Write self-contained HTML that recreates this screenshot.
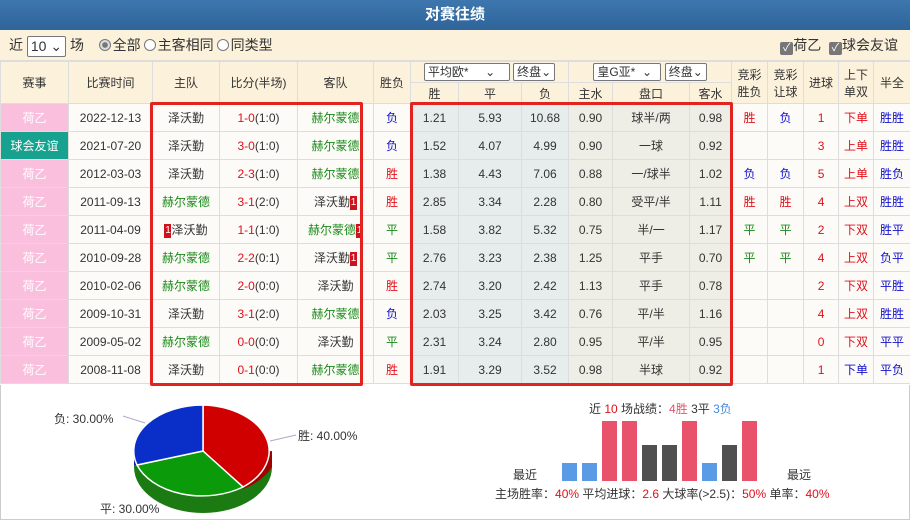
<!DOCTYPE html>
<html style="overflow:hidden;width:910px;height:520px"><head><meta charset="utf-8"><style>
*{margin:0;padding:0;box-sizing:border-box}
body{width:910px;height:520px;overflow:hidden;background:#fff;font-family:"Liberation Sans","Noto Sans CJK SC",sans-serif;font-size:12px;color:#333;position:relative}
.title{height:30px;background:linear-gradient(#3d77ad,#2f6499);color:#fff;font-weight:bold;font-size:15px;text-align:center;line-height:30px}
.filter{height:31px;background:#fcf2dc;border-bottom:1px solid #ddd;position:relative;font-size:14px;line-height:31px;padding-left:9px}
.sel{display:inline-block;border:1px solid #777;background:#fff;height:21px;line-height:19px;padding:0 3px;font-size:14px;vertical-align:middle;border-radius:2px}
.radio{display:inline-block;width:12px;height:12px;border:1px solid #777;border-radius:50%;vertical-align:-1px;background:#fff;margin:0 2px 0 3px}
.radio.on{background:radial-gradient(#777 35%,#ddd 45%)}
.chk{display:inline-block;width:13px;height:13px;background:#777;color:#fff;font-size:11px;line-height:13px;text-align:center;vertical-align:-1px;border-radius:2px}
table{position:absolute;left:0;top:61px;border-collapse:collapse;table-layout:fixed;width:910px}
td{border:1px solid #ddd;text-align:center;height:28px;font-size:12px;background:#fdfbf8;padding:0;white-space:nowrap;overflow:hidden}
thead td{background:#fcf2dc;height:21px;font-size:12px}
.lg{background:#fbbfde;color:#fff}
.fr{background:#16a28e;color:#fff}
.o{background:#e6edec}
.a{background:#eeeee6}
.r{color:#e0101a}.g{color:#1a8a1a}.b{color:#1010c8}
.sm{display:inline-block;border:1px solid #777;background:#fff;height:18px;line-height:16px;font-size:12px;padding:0 3px;text-align:left;border-radius:2px}
.n1{display:inline-block;background:#d0101a;color:#fff;font-size:10px;width:7px;line-height:14px;vertical-align:1px}
.box{position:absolute;border:3px solid #e22420;border-radius:2px}
.bar{position:absolute;width:15px;bottom:39px}
.bb{background:#5b9be6}.br{background:#e8526a}.bd{background:#505050}
.t{position:absolute;font-size:12px;white-space:nowrap}
</style></head><body>
<div class="title">对赛往绩</div>
<div class="filter">近 <span class="sel">10 ⌄</span> 场 &nbsp;&nbsp;<span class="radio on"></span>全部<span class="radio"></span>主客相同<span class="radio"></span>同类型
<span style="position:absolute;right:12px;top:0"><span class="chk">✓</span>荷乙 &nbsp;<span class="chk">✓</span>球会友谊</span></div>
<table>
<colgroup><col style="width:68px"><col style="width:84px"><col style="width:67px"><col style="width:78px"><col style="width:76px"><col style="width:37px"><col style="width:48px"><col style="width:63px"><col style="width:47px"><col style="width:44px"><col style="width:77px"><col style="width:42px"><col style="width:36px"><col style="width:36px"><col style="width:35px"><col style="width:35px"><col style="width:37px"></colgroup>
<thead>
<tr><td rowspan="2">赛事</td><td rowspan="2">比赛时间</td><td rowspan="2">主队</td><td rowspan="2">比分(半场)</td><td rowspan="2">客队</td><td rowspan="2">胜负</td><td colspan="3"><span class="sm" style="width:86px">平均欧* &nbsp; &nbsp; ⌄</span> <span class="sm">终盘⌄</span></td><td colspan="3"><span class="sm" style="width:68px">皇G亚* &nbsp;⌄</span> <span class="sm">终盘⌄</span></td><td rowspan="2">竞彩<br>胜负</td><td rowspan="2">竞彩<br>让球</td><td rowspan="2">进球</td><td rowspan="2">上下<br>单双</td><td rowspan="2">半全</td></tr>
<tr><td>胜</td><td>平</td><td>负</td><td>主水</td><td>盘口</td><td>客水</td></tr>
</thead>
<tbody>
<tr><td class="lg">荷乙</td><td>2022-12-13</td><td>泽沃勤</td><td><span class="r">1-0</span>(1:0)</td><td class="g">赫尔蒙德</td><td class="b">负</td><td class="o">1.21</td><td class="o">5.93</td><td class="o">10.68</td><td class="a">0.90</td><td class="a">球半/两</td><td class="a">0.98</td><td class="r">胜</td><td class="b">负</td><td class="r">1</td><td class="r">下单</td><td class="b">胜胜</td></tr>
<tr><td class="fr">球会友谊</td><td>2021-07-20</td><td>泽沃勤</td><td><span class="r">3-0</span>(1:0)</td><td class="g">赫尔蒙德</td><td class="b">负</td><td class="o">1.52</td><td class="o">4.07</td><td class="o">4.99</td><td class="a">0.90</td><td class="a">一球</td><td class="a">0.92</td><td></td><td></td><td class="r">3</td><td class="r">上单</td><td class="b">胜胜</td></tr>
<tr><td class="lg">荷乙</td><td>2012-03-03</td><td>泽沃勤</td><td><span class="r">2-3</span>(1:0)</td><td class="g">赫尔蒙德</td><td class="r">胜</td><td class="o">1.38</td><td class="o">4.43</td><td class="o">7.06</td><td class="a">0.88</td><td class="a">一/球半</td><td class="a">1.02</td><td class="b">负</td><td class="b">负</td><td class="r">5</td><td class="r">上单</td><td class="b">胜负</td></tr>
<tr><td class="lg">荷乙</td><td>2011-09-13</td><td class="g">赫尔蒙德</td><td><span class="r">3-1</span>(2:0)</td><td>泽沃勤<span class="n1">1</span></td><td class="r">胜</td><td class="o">2.85</td><td class="o">3.34</td><td class="o">2.28</td><td class="a">0.80</td><td class="a">受平/半</td><td class="a">1.11</td><td class="r">胜</td><td class="r">胜</td><td class="r">4</td><td class="r">上双</td><td class="b">胜胜</td></tr>
<tr><td class="lg">荷乙</td><td>2011-04-09</td><td><span class="n1">1</span>泽沃勤</td><td><span class="r">1-1</span>(1:0)</td><td class="g">赫尔蒙德<span class="n1">1</span></td><td class="g">平</td><td class="o">1.58</td><td class="o">3.82</td><td class="o">5.32</td><td class="a">0.75</td><td class="a">半/一</td><td class="a">1.17</td><td class="g">平</td><td class="g">平</td><td class="r">2</td><td class="r">下双</td><td class="b">胜平</td></tr>
<tr><td class="lg">荷乙</td><td>2010-09-28</td><td class="g">赫尔蒙德</td><td><span class="r">2-2</span>(0:1)</td><td>泽沃勤<span class="n1">1</span></td><td class="g">平</td><td class="o">2.76</td><td class="o">3.23</td><td class="o">2.38</td><td class="a">1.25</td><td class="a">平手</td><td class="a">0.70</td><td class="g">平</td><td class="g">平</td><td class="r">4</td><td class="r">上双</td><td class="b">负平</td></tr>
<tr><td class="lg">荷乙</td><td>2010-02-06</td><td class="g">赫尔蒙德</td><td><span class="r">2-0</span>(0:0)</td><td>泽沃勤</td><td class="r">胜</td><td class="o">2.74</td><td class="o">3.20</td><td class="o">2.42</td><td class="a">1.13</td><td class="a">平手</td><td class="a">0.78</td><td></td><td></td><td class="r">2</td><td class="r">下双</td><td class="b">平胜</td></tr>
<tr><td class="lg">荷乙</td><td>2009-10-31</td><td>泽沃勤</td><td><span class="r">3-1</span>(2:0)</td><td class="g">赫尔蒙德</td><td class="b">负</td><td class="o">2.03</td><td class="o">3.25</td><td class="o">3.42</td><td class="a">0.76</td><td class="a">平/半</td><td class="a">1.16</td><td></td><td></td><td class="r">4</td><td class="r">上双</td><td class="b">胜胜</td></tr>
<tr><td class="lg">荷乙</td><td>2009-05-02</td><td class="g">赫尔蒙德</td><td><span class="r">0-0</span>(0:0)</td><td>泽沃勤</td><td class="g">平</td><td class="o">2.31</td><td class="o">3.24</td><td class="o">2.80</td><td class="a">0.95</td><td class="a">平/半</td><td class="a">0.95</td><td></td><td></td><td class="r">0</td><td class="r">下双</td><td class="b">平平</td></tr>
<tr><td class="lg">荷乙</td><td>2008-11-08</td><td>泽沃勤</td><td><span class="r">0-1</span>(0:0)</td><td class="g">赫尔蒙德</td><td class="r">胜</td><td class="o">1.91</td><td class="o">3.29</td><td class="o">3.52</td><td class="a">0.98</td><td class="a">半球</td><td class="a">0.92</td><td></td><td></td><td class="r">1</td><td class="b">下单</td><td class="b">平负</td></tr>
</tbody></table>
<div class="box" style="left:150px;top:102px;width:213px;height:284px"></div>
<div class="box" style="left:410px;top:102px;width:323px;height:284px"></div>
<div style="position:absolute;left:0;top:385px;width:910px;height:135px;border:1px solid #ccc;border-top:none"></div>
<svg style="position:absolute;left:0;top:385px" width="460" height="134">
<path d="M134 66 L134 82 A69 46 0 0 0 272 82 L272 66 Z" fill="#1c7a12"/>
<path d="M243 104 A69 46 0 0 0 272 82 L272 66 L243 88 Z" fill="#a00000"/>
<path d="M134 66 L134 80 L138 80 Z" fill="#0020a0"/>
<path d="M203 66 L203 20 A69 46 0 0 1 243 102 Z" fill="#d00000" stroke="#fff" stroke-width="1.5"/>
<path d="M203 66 L243 102 A69 46 0 0 1 137 80 Z" fill="#0a9a0a" stroke="#fff" stroke-width="1.5"/>
<path d="M203 66 L137 80 A69 46 0 0 1 203 20 Z" fill="#0a2ec8" stroke="#fff" stroke-width="1.5"/>
<path d="M123 31 L145 38 M270 56 L296 50" stroke="#aac" fill="none"/>
<text x="54" y="38" font-size="12" fill="#333">负: 30.00%</text>
<text x="298" y="55" font-size="12" fill="#333">胜: 40.00%</text>
<text x="100" y="128" font-size="12" fill="#333">平: 30.00%</text>
<polygon points="403,494 535,442 530,433 562,428 542,455 537,447 406,499" fill="#e8221a"/>
</svg>
<div class="t" style="left:589px;top:400px">近 <span class="r">10</span> 场战绩：<span style="color:#e8526a">4胜</span> 3平 <span style="color:#4a8ade">3负</span></div>
<div class="bar bb" style="left:562px;height:18px"></div>
<div class="bar bb" style="left:582px;height:18px"></div>
<div class="bar br" style="left:602px;height:60px"></div>
<div class="bar br" style="left:622px;height:60px"></div>
<div class="bar bd" style="left:642px;height:36px"></div>
<div class="bar bd" style="left:662px;height:36px"></div>
<div class="bar br" style="left:682px;height:60px"></div>
<div class="bar bb" style="left:702px;height:18px"></div>
<div class="bar bd" style="left:722px;height:36px"></div>
<div class="bar br" style="left:742px;height:60px"></div>
<div class="t" style="left:513px;top:466px">最近</div>
<div class="t" style="left:787px;top:466px">最远</div>
<div class="t" style="left:495px;top:485px">主场胜率：<span class="r">40%</span> 平均进球：<span class="r">2.6</span> 大球率(&gt;2.5)：<span class="r">50%</span> 单率：<span class="r">40%</span></div>
</body></html>
